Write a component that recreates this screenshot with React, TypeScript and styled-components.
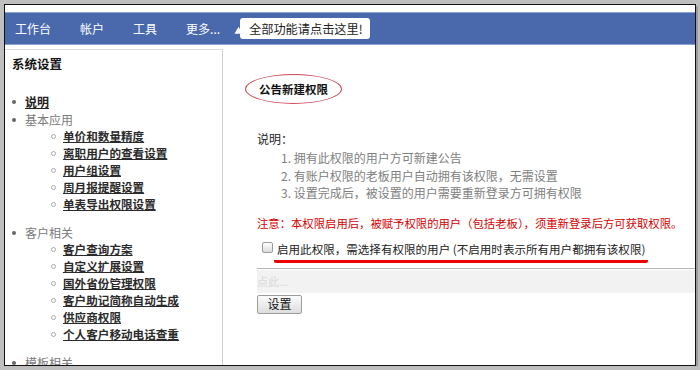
import styled, { createGlobalStyle } from "styled-components"

const GlobalStyle = createGlobalStyle`
  html, body {
    margin: 0;
    padding: 0;
    background: #bfbfbf;
  }
  body {
    font-family: "Noto Sans CJK SC", "Liberation Sans", sans-serif;
  }
`

const Frame = styled.div`
  box-sizing: border-box;
  margin: 4px 0 0 4px;
  width: 692px;
  height: 362px;
  border: 1px solid #111;
  background: #fff;
  box-shadow: 2px 2px 0 #9a9a9a;
  overflow: hidden;
  padding-top: 7px;
  display: flex;
  flex-direction: column;
`

const NavBar = styled.div`
  height: 31px;
  background: #4a69ac;
  border-top: 1px solid #8da2cc;
  border-bottom: 1px solid #8da2cc;
  display: flex;
  align-items: center;
  padding-left: 10px;
  gap: 29px;
  flex-shrink: 0;
`

const NavItem = styled.span`
  color: #fff;
  font-size: 12px;
  line-height: 16px;
`

const Bubble = styled.span`
  position: relative;
  margin-left: -9px;
  height: 21px;
  padding: 0 7px 0 9px;
  background: #fff;
  border-radius: 3px;
  color: #222;
  font-size: 12.2px;
  display: flex;
  align-items: center;
  &:before {
    content: "";
    position: absolute;
    left: -6px;
    top: 10px;
    border-top: 4px solid transparent;
    border-right: 7px solid #fff;
    border-bottom: 4px solid transparent;
    transform: rotate(-30deg);
  }
`

const Body = styled.div`
  flex: 1;
  display: flex;
  margin-top: 4px;
  min-height: 0;
`

const Sidebar = styled.div`
  width: 217px;
  flex-shrink: 0;
  border-top: 1px solid #dcdcdc;
  border-right: 1px solid #cfcfcf;
  padding-top: 5px;
`

const SideTitle = styled.div`
  font-size: 12.5px;
  font-weight: 700;
  color: #111;
  line-height: 18px;
  padding-left: 7px;
  margin-bottom: 20px;
`

const MenuList = styled.ul`
  list-style: none;
  margin: 0;
  padding: 0;
`

const MenuGroup = styled.li`
  margin-bottom: 11px;
`

const TopItem = styled.div<{ $link?: boolean }>`
  position: relative;
  padding-left: 20px;
  font-size: 12px;
  line-height: 17px;
  color: ${({ $link }) => ($link ? "#222" : "#7a7a7a")};
  font-weight: ${({ $link }) => ($link ? 700 : 400)};
  text-decoration: ${({ $link }) => ($link ? "underline" : "none")};
  &:before {
    content: "";
    position: absolute;
    left: 7px;
    top: 7px;
    width: 4px;
    height: 4px;
    border-radius: 50%;
    background: #666;
  }
`

const LinkEntry = styled.li`
  margin-bottom: 1px;
`

const SubList = styled.ul`
  list-style: none;
  margin: 0;
  padding: 0;
`

const SubItem = styled.li`
  position: relative;
  padding-left: 58px;
  font-size: 11.6px;
  line-height: 17px;
  color: #2a2a2a;
  font-weight: 700;
  text-decoration: underline;
  white-space: nowrap;
  &:before {
    content: "";
    position: absolute;
    left: 46px;
    top: 6px;
    width: 3px;
    height: 3px;
    border-radius: 50%;
    border: 1px solid #aaa;
  }
`

const Main = styled.div`
  flex: 1;
  padding: 25px 0 0 34px;
  font-size: 12px;
  color: #222;
`

const TitleOval = styled.div`
  box-sizing: border-box;
  margin-left: -12px;
  width: 97px;
  height: 30px;
  border: 1.5px solid #d04a5a;
  border-radius: 50%;
  display: flex;
  align-items: center;
  justify-content: center;
  font-size: 11.5px;
  font-weight: 700;
  color: #111;
`

const Label = styled.div`
  margin-top: 26px;
  line-height: 18px;
  color: #222;
`

const Steps = styled.ol`
  margin: 1px 0 0;
  padding: 0 0 0 24px;
  list-style: none;
  color: #808080;
  line-height: 17.5px;
`

const Warning = styled.div`
  margin-top: 12px;
  color: #d80000;
  font-size: 11.35px;
  line-height: 18px;
  white-space: nowrap;
`

const CheckRow = styled.div`
  margin-top: 8px;
  display: flex;
  align-items: flex-start;
  font-size: 11.55px;
  color: #222;
`

const Check = styled.span`
  box-sizing: border-box;
  margin: 2px 0 0 5px;
  width: 11px;
  height: 11px;
  border: 1px solid #9a9a9a;
  border-radius: 2px;
  background: linear-gradient(#fff, #dcdcdc);
`

const Marked = styled.span`
  margin-left: 1px;
  padding: 0 3px 2px;
  line-height: 18px;
  border-bottom: 3px solid #ee0000;
  border-radius: 2px;
  white-space: nowrap;
`

const Divider = styled.div`
  margin-top: 5px;
  border-top: 1px solid #b5b5b5;
`

const PickerBar = styled.div`
  margin-top: 1px;
  height: 23px;
  background: #f2f2f2;
  color: #d9d9d9;
  font-size: 11px;
  line-height: 23px;
`

const Button = styled.button`
  display: block;
  margin-top: 2px;
  width: 45px;
  height: 19px;
  padding: 0;
  border: 1px solid #9c9c9c;
  border-radius: 2px;
  background: linear-gradient(#fbfbfb, #dedede);
  font-family: inherit;
  font-size: 12px;
  line-height: 16px;
  color: #111;
`

const basic = ["单价和数量精度", "离职用户的查看设置", "用户组设置", "周月报提醒设置", "单表导出权限设置"]
const customer = ["客户查询方案", "自定义扩展设置", "国外省份管理权限", "客户助记简称自动生成", "供应商权限", "个人客户移动电话查重"]

const App = () => {
  return (
    <>
      <GlobalStyle />
      <Frame>
        <NavBar>
          <NavItem>工作台</NavItem>
          <NavItem>帐户</NavItem>
          <NavItem>工具</NavItem>
          <NavItem>更多...</NavItem>
          <Bubble>全部功能请点击这里!</Bubble>
        </NavBar>
        <Body>
          <Sidebar>
            <SideTitle>系统设置</SideTitle>
            <MenuList>
              <LinkEntry>
                <TopItem $link>说明</TopItem>
              </LinkEntry>
              <MenuGroup>
                <TopItem>基本应用</TopItem>
                <SubList>
                  {basic.map((s) => (
                    <SubItem key={s}>{s}</SubItem>
                  ))}
                </SubList>
              </MenuGroup>
              <MenuGroup>
                <TopItem>客户相关</TopItem>
                <SubList>
                  {customer.map((s) => (
                    <SubItem key={s}>{s}</SubItem>
                  ))}
                </SubList>
              </MenuGroup>
              <MenuGroup>
                <TopItem>模板相关</TopItem>
              </MenuGroup>
            </MenuList>
          </Sidebar>
          <Main>
            <TitleOval>公告新建权限</TitleOval>
            <Label>说明：</Label>
            <Steps>
              <li>1. 拥有此权限的用户方可新建公告</li>
              <li>2. 有账户权限的老板用户自动拥有该权限，无需设置</li>
              <li>3. 设置完成后，被设置的用户需要重新登录方可拥有权限</li>
            </Steps>
            <Warning>注意：本权限启用后，被赋予权限的用户（包括老板），须重新登录后方可获取权限。</Warning>
            <CheckRow>
              <Check />
              <Marked>启用此权限，需选择有权限的用户 (不启用时表示所有用户都拥有该权限)</Marked>
            </CheckRow>
            <Divider />
            <PickerBar>点此...</PickerBar>
            <Button>设置</Button>
          </Main>
        </Body>
      </Frame>
    </>
  )
}

export default App
